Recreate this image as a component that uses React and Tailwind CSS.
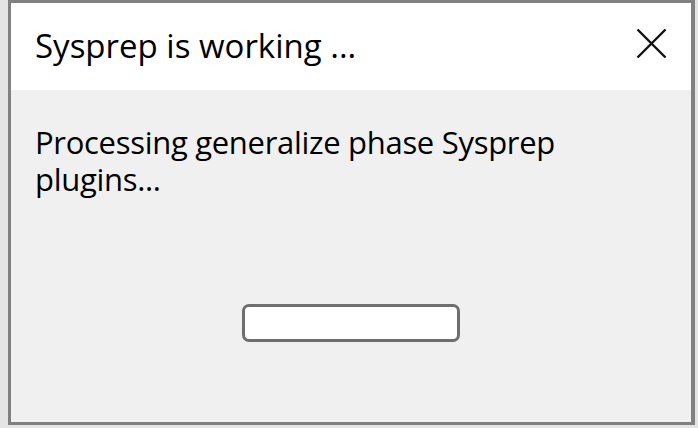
export default function App() {
  return (
    <div className="w-[698px] h-[428px] bg-[#e4e4e4] flex pl-[8px] pr-[3px] pb-[3px]" style={{ fontFamily: '"Open Sans", "Noto Sans", sans-serif' }}>
      <div className="flex-1 flex flex-col border-l-[3px] border-t-[3px] border-r-[4px] border-b-[3px] border-[#808080] bg-[#f0f0f0]">
        <div className="h-[87px] bg-white flex items-center justify-between pl-[24px] pr-[24px]">
          <span className="text-[33px] text-black leading-none tracking-[0px] mb-[2px]">Sysprep is working ...</span>
          <svg width="31" height="31" viewBox="0 0 31 31" className="mb-[6px]">
            <path d="M1.5 1.5 L29.5 29.5 M29.5 1.5 L1.5 29.5" stroke="#111" strokeWidth="2.4" fill="none" />
          </svg>
        </div>
        <div className="flex-1 flex flex-col pl-[24px] pt-[34px]">
          <p className="text-[31px] leading-[37px] text-black w-[560px] tracking-[-0.3px]">Processing generalize phase Sysprep plugins...</p>
          <div className="flex justify-center mt-[106px] pr-[24px]">
            <div className="w-[218px] h-[38px] rounded-[7px] border-[3px] border-[#6e6e6e] bg-white"></div>
          </div>
        </div>
      </div>
    </div>
  );
}
